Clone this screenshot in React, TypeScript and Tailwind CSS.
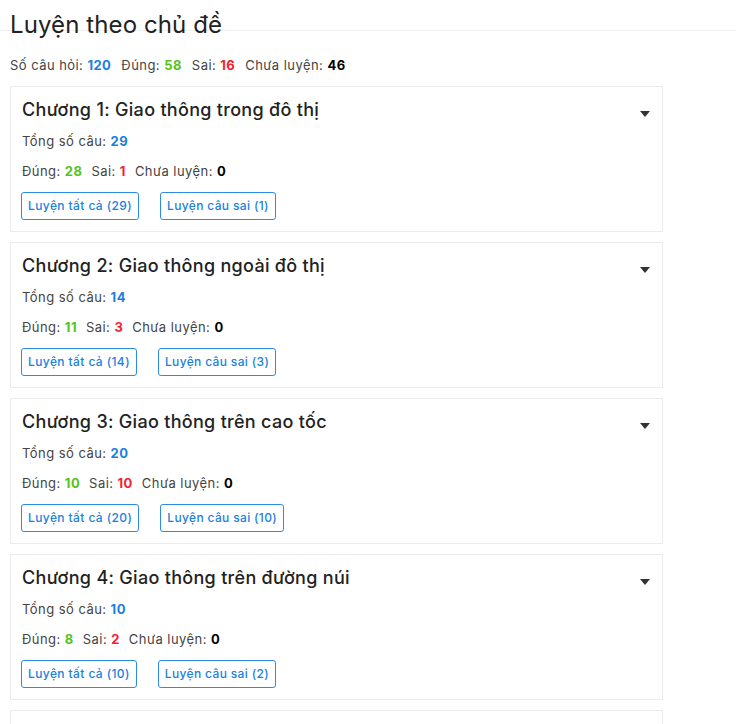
import React from 'react';

interface Chapter {
  id: number;
  title: string;
  total: number;
  correct: number;
  wrong: number;
  todo: number;
}

const chapters: Chapter[] = [
  { id: 1, title: 'Chương 1: Giao thông trong đô thị', total: 29, correct: 28, wrong: 1, todo: 0 },
  { id: 2, title: 'Chương 2: Giao thông ngoài đô thị', total: 14, correct: 11, wrong: 3, todo: 0 },
  { id: 3, title: 'Chương 3: Giao thông trên cao tốc', total: 20, correct: 10, wrong: 10, todo: 0 },
  { id: 4, title: 'Chương 4: Giao thông trên đường núi', total: 10, correct: 8, wrong: 2, todo: 0 },
  { id: 5, title: 'Chương 5: Giao thông khi trời mưa, sương mù', total: 47, correct: 1, wrong: 1, todo: 45 },
];

function Caret() {
  return (
    <svg width="10" height="6" viewBox="0 0 10 6" className="mt-[7px] shrink-0">
      <path d="M0 0h10L5 6z" fill="#333" />
    </svg>
  );
}

function ChapterCard({ chapter }: { chapter: Chapter }) {
  return (
    <div className="border border-[#ebebeb] bg-white px-[11px] pt-[10px] pb-[11px]">
      <div className="flex items-center justify-between pr-[1px]">
        <h2 className="text-[18px] leading-[26px] font-medium tracking-[0.3px] text-[#222]">{chapter.title}</h2>
        <Caret />
      </div>
      <div className="mt-[8px] text-[13px] leading-[20px] tracking-[0.45px] text-[#444]">
        Tổng số câu: <span className="font-bold text-[#1a7fe0]">{chapter.total}</span>
      </div>
      <div className="mt-[10px] flex gap-[9px] text-[13px] leading-[20px] tracking-[0.45px] text-[#444]">
        <span>
          Đúng: <span className="font-bold text-[#52c41a]">{chapter.correct}</span>
        </span>
        <span>
          Sai: <span className="font-bold text-[#f5222d]">{chapter.wrong}</span>
        </span>
        <span>
          Chưa luyện: <span className="font-bold text-black">{chapter.todo}</span>
        </span>
      </div>
      <div className="mt-[11px] flex gap-[21px]">
        <button className="-ml-[1px] h-[28px] rounded-[3px] border border-[#2b8be6] px-[6px] text-[12px] font-medium tracking-[0.4px] text-[#1a7fe0]">
          Luyện tất cả ({chapter.total})
        </button>
        <button className="h-[28px] rounded-[3px] border border-[#2b8be6] px-[6px] text-[12px] font-medium tracking-[0.35px] text-[#1a7fe0]">
          Luyện câu sai ({chapter.wrong})
        </button>
      </div>
    </div>
  );
}

export default function App() {
  return (
    <div className="min-h-screen bg-white font-['Inter',sans-serif] text-[#333]">
      <div className="h-[31px] border-b border-[#efefef] pl-[10px]">
        <h1 className="pt-[8px] text-[24px] leading-[34px] tracking-[0.1px] text-[#222]">Luyện theo chủ đề</h1>
      </div>
      <div className="mt-[24px] flex gap-[10px] px-[10px] text-[13px] leading-[20px] tracking-[0.45px] text-[#444]">
        <span>
          Số câu hỏi: <span className="font-bold text-[#1a7fe0]">120</span>
        </span>
        <span>
          Đúng: <span className="font-bold text-[#52c41a]">58</span>
        </span>
        <span>
          Sai: <span className="font-bold text-[#f5222d]">16</span>
        </span>
        <span>
          Chưa luyện: <span className="font-bold text-black">46</span>
        </span>
      </div>
      <div className="mt-[11px] flex w-[673px] flex-col gap-[10px] px-[10px]">
        {chapters.map((c) => (
          <ChapterCard key={c.id} chapter={c} />
        ))}
      </div>
    </div>
  );
}
